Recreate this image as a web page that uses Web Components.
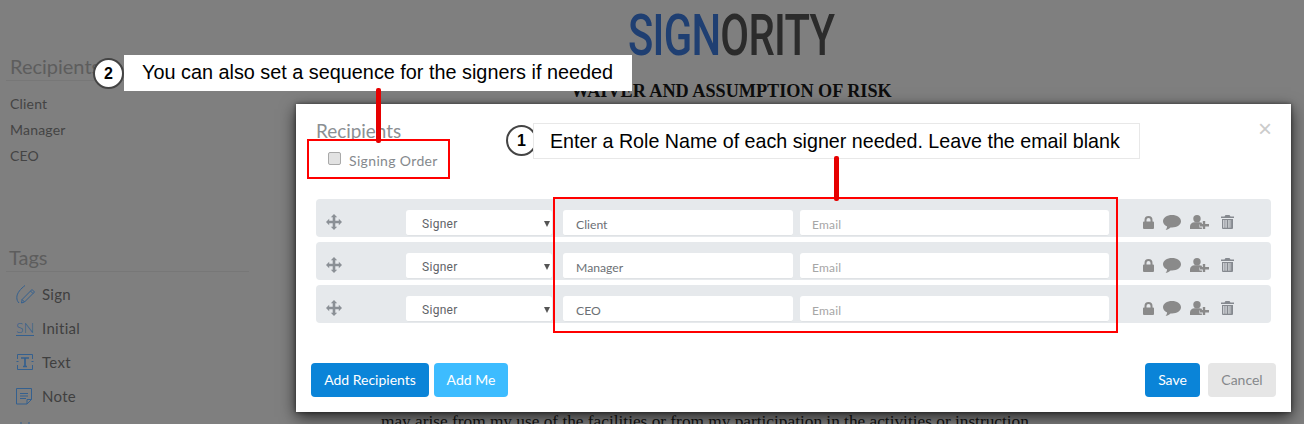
<!DOCTYPE html>
<html>
<head>
<meta charset="utf-8">
<title>Signority recipients</title>
<style>
  html, body { margin: 0; padding: 0; }
  body { width: 1304px; height: 424px; overflow: hidden; background: #7f7f7f; font-family: Lato, "Liberation Sans", sans-serif; }
</style>
</head>
<body>
<sig-page>
  <sig-sidebar slot="side">
    <sig-section heading="Recipients">
      <sig-person>Client</sig-person>
      <sig-person>Manager</sig-person>
      <sig-person>CEO</sig-person>
    </sig-section>
    <sig-section heading="Tags" tags>
      <sig-tag kind="sign">Sign</sig-tag>
      <sig-tag kind="initial">Initial</sig-tag>
      <sig-tag kind="text">Text</sig-tag>
      <sig-tag kind="note">Note</sig-tag>
      <sig-tag kind="date"></sig-tag>
    </sig-section>
  </sig-sidebar>
  <sig-document slot="doc"></sig-document>
  <sig-modal slot="modal">
    <sig-row slot="rows" email="Email">Client</sig-row>
    <sig-row slot="rows" email="Email">Manager</sig-row>
    <sig-row slot="rows" email="Email">CEO</sig-row>
    <sig-button slot="left" kind="primary" style="width:118px">Add Recipients</sig-button>
    <sig-button slot="left" kind="light" style="width:74px">Add Me</sig-button>
    <sig-button slot="right" kind="primary" style="width:55px">Save</sig-button>
    <sig-button slot="right" kind="muted" style="width:68px">Cancel</sig-button>
  </sig-modal>
  <sig-callout slot="notes" num="2" style="left:93px;top:55px;--box:508px;--pad:18px;--fs:19.830px">You can also set a sequence for the signers if needed</sig-callout>
  <sig-callout slot="notes" num="1" outlined style="left:506px;top:123px;--box:607px;--pad:17px;--lift:-2px;--fs:19.680px">Enter a Role Name of each signer needed. Leave the email blank</sig-callout>
  <sig-mark slot="notes" style="left:307px;top:139px;width:139px;height:36px;--stem-x:67px;--stem-top:-53px;--stem-h:55px"></sig-mark>
  <sig-mark slot="notes" style="left:553px;top:197px;width:561px;height:132px;--stem-x:279px;--stem-top:-43px;--stem-h:45px"></sig-mark>
</sig-page>

<script>
function define(name, css, html) {
  customElements.define(name, class extends HTMLElement {
    connectedCallback() {
      if (this.shadowRoot) return;
      this.attachShadow({ mode: 'open' }).innerHTML =
        `<style>${css}</style>` + (typeof html === 'function' ? html(this) : html);
    }
  });
}

define('sig-page', `
  :host { display: grid; grid-template-columns: 296px 1fr; width: 1304px; height: 424px; position: relative; overflow: hidden; }
`, `<slot name="side"></slot><slot name="doc"></slot><slot name="modal"></slot><slot name="notes"></slot>`);

define('sig-sidebar', `
  :host { display: flex; flex-direction: column; gap: 76px; padding: 54px 0 0 6px; width: 243px; }
`, `<slot></slot>`);

define('sig-section', `
  :host { display: block; }
  h3 { margin: 0; padding: 0 0 0 4px; height: 26px; font: 400 20px/24px Lato, sans-serif; color: #5d5d5d; border-bottom: 1px solid #777; }
  :host([tags]) h3 { padding-left: 3px; }
  .list { display: flex; flex-direction: column; padding: 10px 0 0 4px; }
  :host([tags]) .list { padding: 5px 0 0 10px; }
`, el => `<h3>${el.getAttribute('heading')}</h3><div class="list"><slot></slot></div>`);

define('sig-person', `
  :host { display: block; height: 26px; font: 400 14px/26px Lato, sans-serif; letter-spacing: .2px; color: #444; }
`, `<slot></slot>`);

const tagIcons = {
  sign: `<svg width="19" height="19" viewBox="0 0 19 19" fill="none" stroke="#34608f" stroke-width="1"><path d="M9 .5C5 3.500.8 8 .8 12.500c0 2 .7 4 2.200 5.500"/><path d="M5.500 18l.6-3.500L16 4.500l2.500 2.500-10 10z"/><path d="M6.100 14.500l2.400 2.500M14.500 6l2.500 2.500"/></svg>`,
  initial: `<span class="sn">SN</span>`,
  text: `<svg width="18" height="16" viewBox="0 0 18 16" fill="none" stroke="#34608f" stroke-width="1"><path d="M1.500 5V.5h15V5M1.500 11v4.500h15V11"/><path d="M5 4h8M9 4v8.500M7 12.500h4" stroke-width="1.700"/><path d="M.5 7.500h2M15.500 7.500h2"/></svg>`,
  note: `<svg width="17" height="17" viewBox="0 0 17 17" fill="none" stroke="#34608f" stroke-width="1"><path d="M.5.500h15v11l-4.500 4.500H.5z"/><path d="M4 5.500h8M4 8h8M4 10.500h6"/><path d="M15.500 11.500h-4.500v4.500"/></svg>`,
  date: `<svg width="18" height="18" viewBox="0 0 18 18" fill="none" stroke="#34608f" stroke-width="1"><rect x="1.500" y="3.500" width="15" height="13"/><path d="M5 1v4M13 1v4"/></svg>`
};
define('sig-tag', `
  :host { display: flex; align-items: center; height: 34px; font: 400 15px/34px Lato, sans-serif; letter-spacing: .3px; color: #3f3f3f; }
  .ic { width: 26px; flex: none; display: flex; align-items: center; }
  .sn { color: #34608f; border-bottom: 1px solid #34608f; font: 300 14px/15px Lato, sans-serif; letter-spacing: 0; }
`, el => `<span class="ic">${tagIcons[el.getAttribute('kind')]}</span><slot></slot>`);

define('sig-document', `
  :host { display: flex; flex-direction: column; align-items: flex-start; padding-left: 85px; position: relative; height: 424px; box-sizing: border-box; }
  .logo { height: 70px; margin-left: 247px; font: 500 57.500px/71px Roboto, sans-serif; transform: scaleX(.727); transform-origin: 0 0; white-space: nowrap; color: #2b2b2b; letter-spacing: -1px; }
  .logo b { font-weight: 500; color: #1f3f72; }
  h1 { margin: 10px 0 0 190px; font: 700 18.200px/22px "Liberation Serif", serif; color: #0d0d0d; white-space: nowrap; }
  p { margin: 310px 0 0; font: 400 17.300px/20px "Liberation Serif", serif; color: #111; white-space: nowrap; }
`, `<div class="logo"><b>SIGN</b>ORITY</div>
  <h1>WAIVER AND ASSUMPTION OF RISK</h1>
  <p>may arise from my use of the facilities or from my participation in the activities or instruction,</p>`);

define('sig-modal', `
  :host { position: absolute; left: 296px; top: 104px; width: 995px; height: 308px; background: #fff; box-shadow: 0 5px 15px rgba(0,0,0,.7), 0 0 4px rgba(0,0,0,.5); display: flex; flex-direction: column; box-sizing: border-box; }
  header { height: 95px; padding: 17px 20px 0; box-sizing: border-box; position: relative; }
  h2 { margin: 0; font: 400 18.900px/20px Lato, sans-serif; color: #8b8f93; }
  label { display: flex; align-items: center; gap: 8px; margin: 9px 0 0 12px; height: 22px; font: 400 14px/22px Lato, sans-serif; letter-spacing: .35px; color: #85898d; }
  .check { width: 11px; height: 11px; background: #e2e2e2; border: 1px solid #a9a9a9; border-radius: 2px; margin-top: -6px; }
  .close { position: absolute; right: 19px; top: 13px; font: 400 24px/24px "Liberation Sans", sans-serif; color: #cbcbcb; }
  .rows { display: flex; flex-direction: column; gap: 5px; padding: 0 20px; }
  footer { margin-top: auto; display: flex; justify-content: space-between; padding: 0 15px 15px; }
  .group { display: flex; gap: 5px; }
  .group.r { gap: 8px; }
`, `<header>
    <h2>Recipients</h2>
    <label><span class="check"></span>Signing Order</label>
    <span class="close">×</span>
  </header>
  <div class="rows"><slot name="rows"></slot></div>
  <footer>
    <div class="group"><slot name="left"></slot></div>
    <div class="group r"><slot name="right"></slot></div>
  </footer>`);

define('sig-row', `
  :host { display: flex; align-items: flex-start; height: 38px; background: #e6e9ec; border-radius: 4px; padding-top: 11px; box-sizing: border-box; position: relative; }
  .move { width: 90px; flex: none; padding: 4px 0 0 10px; box-sizing: border-box; height: 20px; }
  .select, .field { height: 26px; background: #fff; border-radius: 3px; box-sizing: border-box; border-bottom: 1px solid #dfe2e5; white-space: nowrap; }
  .select { width: 146px; display: flex; justify-content: space-between; padding: 1px 2px 0 16px; font: 400 12px/26px Roboto, sans-serif; letter-spacing: .3px; color: #5f6368; }
  .select i { width: 0; height: 0; margin: 10px 0 0; border: 3px solid transparent; border-top: 6px solid #555; border-bottom: 0; }
  .field { font: 400 12.200px/29px Lato, sans-serif; padding-left: 13px; color: #6c7075; margin-left: 7px; }
  .role { width: 230px; margin-left: 11px; }
  .email { width: 309px; padding-left: 12px; font-size: 12px; color: #a6a6a6; letter-spacing: .2px; }
  .icons { display: flex; align-items: center; height: 24px; margin-left: 34px; color: #8a8a8a; }
  svg { display: block; fill: currentColor; }
  .icons svg { flex: none; }
`, el => `<div class="move"><svg width="16" height="16" viewBox="0 0 16 16" style="color:#8b9096"><path d="M8 0l3.200 3.200H9.300v3.500h3.500V4.800L16 8l-3.200 3.200V9.300H9.300v3.500h1.900L8 16l-3.200-3.200h1.900V9.300H3.200v1.900L0 8l3.200-3.200v1.900h3.500V3.200H4.800z"/></svg></div>
  <div class="select">Signer<i></i></div>
  <div class="field role"><slot></slot></div>
  <div class="field email">${el.getAttribute('email')}</div>
  <div class="icons">
    <svg width="11" height="13" viewBox="0 0 11 13" style="margin-right:9px"><path d="M1.500 5.500V4a4 4 0 0 1 8 0v1.500h.500a1 1 0 0 1 1 1V12a1 1 0 0 1-1 1H1a1 1 0 0 1-1-1V6.500a1 1 0 0 1 1-1zm2 0h4V4a2 2 0 0 0-4 0z"/></svg>
    <svg width="18" height="15" viewBox="0 0 18 15" style="margin-right:9px"><path d="M9 0c5 0 9 2.700 9 6.200s-4 6.200-9 6.200H7.500C6 14 4 14.800 2.500 15c.8-.8 1.500-2.200 1.600-3.600C1.600 10.300 0 8.300 0 6.200 0 2.700 4 0 9 0z"/></svg>
    <svg width="19" height="14" viewBox="0 0 19 14" style="margin-right:12px"><circle cx="7" cy="3.700" r="3.700"/><path d="M0 14v-2.500C0 9 2 7.200 4.500 7.200h5c.9 0 1.700.2 2.400.6V9.500H9.500v3h2.400V14z"/><path d="M12.800 6h2.400v3H19v2.400h-3.800v2.600h-2.400v-2.600H10V9h2.800z"/></svg>
    <svg width="13" height="14" viewBox="0 0 13 14" style="color:#85898f"><path fill-rule="evenodd" d="M4.500 0h4l1 1.500H13V3H0V1.500h3.500zM1 4h11v9a1 1 0 0 1-1 1H2a1 1 0 0 1-1-1zm1.300 1V12.700h1.100V5zm2.200 0V12.700h1.100V5zm2.900 0V12.700h1.100V5zm2.200 0V12.700h.5V5z"/></svg>
  </div>`);

define('sig-button', `
  :host { display: block; height: 34px; border-radius: 4px; text-align: center; font: 400 14px/34px Lato, sans-serif; box-sizing: border-box; color: #fff; white-space: nowrap; }
  :host([kind="primary"]) { background: #0a84d8; }
  :host([kind="light"]) { background: #3dbcff; }
  :host([kind="muted"]) { background: #e6e6e6; color: #85888b; }
`, `<slot></slot>`);

define('sig-callout', `
  :host { position: absolute; display: flex; align-items: center; gap: 0; }
  .num { width: 27px; height: 27px; flex: none; border: 2px solid #444; border-radius: 50%; background: #fff; text-align: center; font: 700 16px/27px "Liberation Sans", sans-serif; color: #000; margin-top: var(--lift, 0); }
  .box { width: var(--box); height: 36px; box-sizing: border-box; padding-left: var(--pad); background: #fff; font: 400 var(--fs)/35px "Liberation Sans", sans-serif; color: #000; white-space: nowrap; }
  :host([outlined]) .box { border: 1px solid #e8e8e8; margin-left: -4px; padding-left: calc(var(--pad) - 1px); line-height: 34px; }
`, el => `<span class="num">${el.getAttribute('num')}</span><div class="box"><slot></slot></div>`);

define('sig-mark', `
  :host { position: absolute; border: 2px solid #f00; display: block; }
  i { position: absolute; left: var(--stem-x); top: var(--stem-top); height: var(--stem-h); width: 5px; border-radius: 2px; background: #e60000; }
`, `<i></i>`);
</script>
</body>
</html>
